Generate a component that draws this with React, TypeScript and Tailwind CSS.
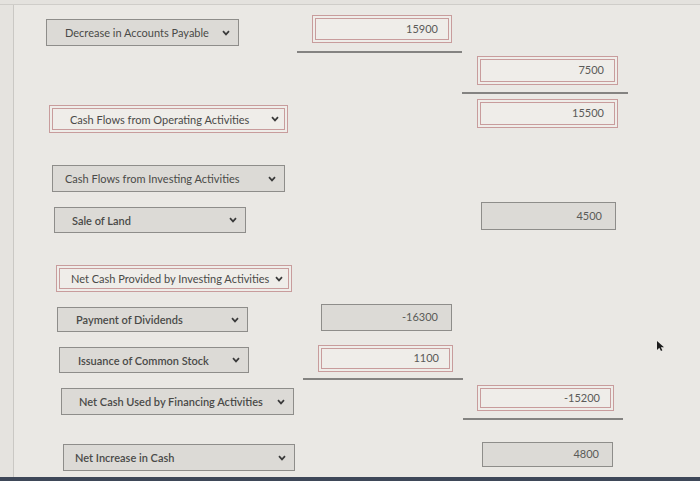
import React from "react";
import clsx from "clsx";

type SelectProps = {
  label: string;
  red?: boolean;
  bold?: boolean;
  pad?: string;
  className?: string;
};

type AmountProps = {
  value: string;
  red?: boolean;
  className?: string;
};

const redBox =
  "border border-[#c89c9c] bg-[#efede9] shadow-[inset_0_0_0_2px_#efede9,inset_0_0_0_3px_#c89c9c]";
const grayBox = "border border-[#8e8d8a] bg-[#dcdad6]";

const Chevron = () => (
  <svg width="8" height="6" viewBox="0 0 8 6" className="shrink-0">
    <path d="M1 1.2 L4 4.4 L7 1.2" fill="none" stroke="#3a3a3a" strokeWidth="1.7" />
  </svg>
);

const Select = ({ label, red, bold, pad = "pl-[18px]", className }: SelectProps) => (
  <div
    className={clsx(
      "flex items-center justify-between pr-[8px] text-[11px] text-[#4a4a48]",
      pad,
      red ? redBox : grayBox,
      bold && "font-semibold",
      className
    )}
  >
    <span className="whitespace-nowrap leading-none">{label}</span>
    <Chevron />
  </div>
);

const Amount = ({ value, red, className }: AmountProps) => (
  <div
    className={clsx(
      "flex items-center justify-end pr-[13px] text-[11px] text-[#5a5a58]",
      red ? redBox : grayBox,
      className
    )}
  >
    {value}
  </div>
);

const Rule = ({ className }: { className?: string }) => (
  <div className={clsx("h-[1.5px] bg-[#848381]", className)} />
);

export default function App() {
  return (
    <div className="w-[700px] h-[481px] overflow-hidden bg-[#eae8e4] flex flex-col relative font-[Lato,sans-serif]">
      <div className="h-[5px] shrink-0 bg-[#e4e2de] border-b border-[#cfcdc9]" />

      <div className="flex-1 flex min-h-0">
        <div className="w-[14px] shrink-0 bg-[#e5e3df] border-r border-[#cac8c4]" />

        <main className="flex-1 pt-[10px]">
          {/* operating */}
          <div className="flex h-[41px]">
            <div className="w-[285px]">
              <Select label="Decrease in Accounts Payable" className="mt-[4px] ml-[32px] w-[193px] h-[27px]" />
            </div>
            <div className="w-[164px]">
              <Amount value="15900" red className="ml-[13px] w-[140px] h-[28px]" />
              <Rule className="mt-[8px] -ml-[2px] w-[165px]" />
            </div>
            <div className="w-[164px]" />
          </div>

          <div className="flex h-[43px]">
            <div className="w-[285px]" />
            <div className="w-[164px]" />
            <div className="w-[164px]">
              <Amount value="7500" red className="ml-[14px] w-[141px] h-[29px]" />
              <Rule className="mt-[7px] -ml-[1px] w-[166px]" />
            </div>
          </div>

          <div className="flex h-[66px]">
            <div className="w-[285px]">
              <Select
                label="Cash Flows from Operating Activities"
                red
                pad="pl-[20px]"
                className="mt-[6px] ml-[35px] w-[239px] h-[28px]"
              />
            </div>
            <div className="w-[164px]" />
            <div className="w-[164px]">
              <Amount value="15500" red className="ml-[14px] w-[141px] h-[29px]" />
            </div>
          </div>

          {/* investing */}
          <div className="flex h-[37px]">
            <div className="w-[285px]">
              <Select
                label="Cash Flows from Investing Activities"
                pad="pl-[12px]"
                className="ml-[38px] w-[233px] h-[27px]"
              />
            </div>
          </div>

          <div className="flex h-[63px]">
            <div className="w-[285px]">
              <Select label="Sale of Land" bold pad="pl-[17px]" className="mt-[5px] ml-[40px] w-[192px] h-[26px]" />
            </div>
            <div className="w-[164px]" />
            <div className="w-[164px]">
              <Amount value="4500" className="ml-[18px] w-[135px] h-[28px]" />
            </div>
          </div>

          <div className="flex h-[39px]">
            <div className="w-[285px]">
              <Select
                label="Net Cash Provided by Investing Activities"
                red
                pad="pl-[14px]"
                className="ml-[42px] w-[236px] h-[27px]"
              />
            </div>
          </div>

          {/* financing */}
          <div className="flex h-[41px]">
            <div className="w-[285px]">
              <Select label="Payment of Dividends" bold className="mt-[3px] ml-[43px] w-[191px] h-[25px]" />
            </div>
            <div className="w-[164px]">
              <Amount value="-16300" className="ml-[22px] w-[131px] h-[27px]" />
            </div>
          </div>

          <div className="flex h-[40px]">
            <div className="w-[285px]">
              <Select label="Issuance of Common Stock" bold className="mt-[2px] ml-[45px] w-[190px] h-[26px]" />
            </div>
            <div className="w-[164px]">
              <Amount value="1100" red className="ml-[19px] w-[135px] h-[27px]" />
              <Rule className="mt-[6px] ml-[4px] w-[160px]" />
            </div>
          </div>

          <div className="flex h-[57px]">
            <div className="w-[285px]">
              <Select
                label="Net Cash Used by Financing Activities"
                bold
                pad="pl-[17px]"
                className="mt-[3px] ml-[47px] w-[233px] h-[27px]"
              />
            </div>
            <div className="w-[164px]" />
            <div className="w-[164px]">
              <Amount value="-15200" red className="ml-[14px] w-[137px] h-[26px]" />
              <Rule className="mt-[7px] w-[160px]" />
            </div>
          </div>

          <div className="flex h-[34px]">
            <div className="w-[285px]">
              <Select label="Net Increase in Cash" bold pad="pl-[11px]" className="mt-[2px] ml-[49px] w-[232px] h-[27px]" />
            </div>
            <div className="w-[164px]" />
            <div className="w-[164px]">
              <Amount value="4800" className="ml-[19px] w-[131px] h-[25px]" />
            </div>
          </div>
        </main>
      </div>

      <div className="h-[4px] shrink-0 bg-[#3e4758]" />

      {/* mouse pointer */}
      <svg width="9" height="12" viewBox="0 0 9 12" className="absolute left-[656px] top-[340px]">
        <path d="M1 1 L1 10 L3.3 7.8 L5 11 L6.4 10.3 L4.8 7.2 L8 7.2 Z" fill="#1d1d1d" />
      </svg>
    </div>
  );
}
